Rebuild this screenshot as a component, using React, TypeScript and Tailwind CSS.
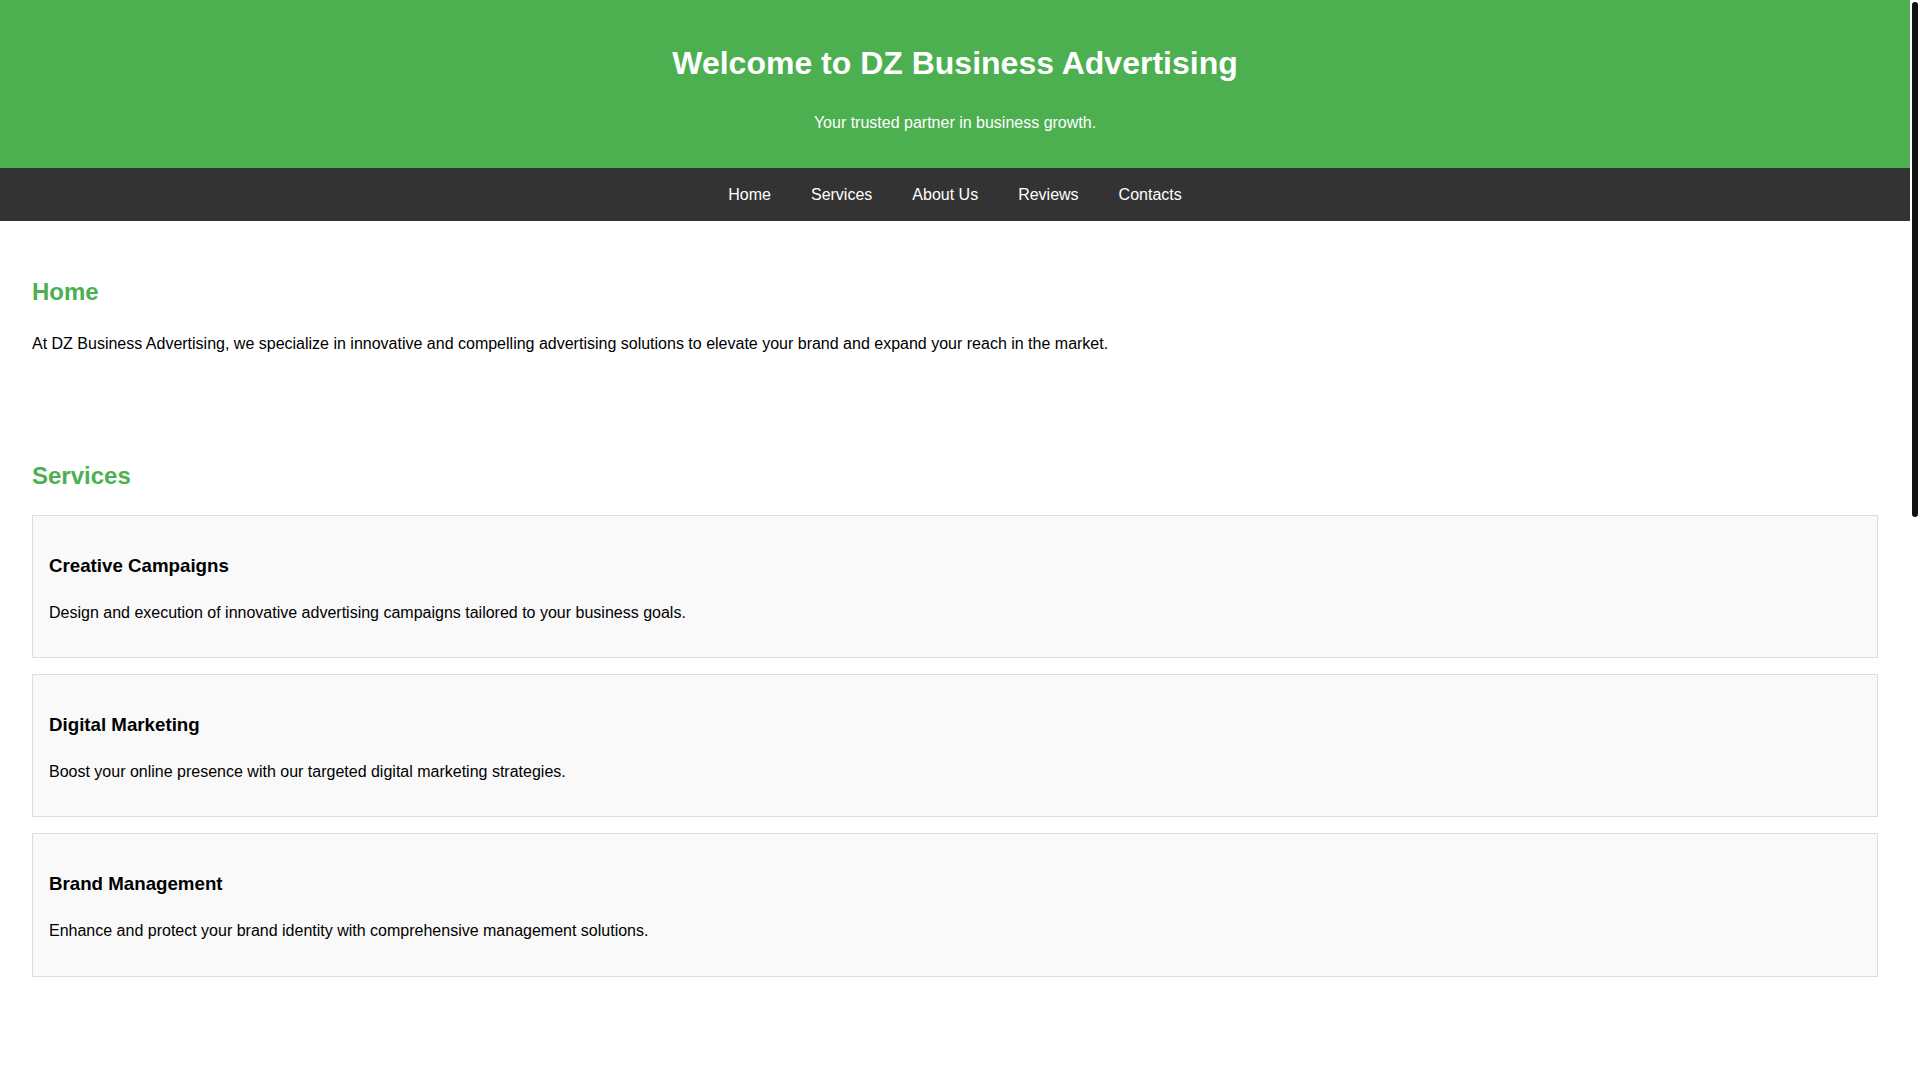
import React from "react"

const links = ["Home", "Services", "About Us", "Reviews", "Contacts"]

const services = [
  {
    title: "Creative Campaigns",
    text: "Design and execution of innovative advertising campaigns tailored to your business goals.",
  },
  {
    title: "Digital Marketing",
    text: "Boost your online presence with our targeted digital marketing strategies.",
  },
  {
    title: "Brand Management",
    text: "Enhance and protect your brand identity with comprehensive management solutions.",
  },
]

const reviews = [
  {
    quote: "DZ Business Advertising transformed our brand. Our sales went up by 40% in just three months!",
    author: "Sarah K., Retail Owner",
  },
  {
    quote: "Professional, creative and always on time. Highly recommended for any growing business.",
    author: "Mohamed B., Startup Founder",
  },
]

const Card = ({ children }: { children: React.ReactNode }) => (
  <div className="flex flex-col border border-[#ddd] bg-[#f9f9f9] p-4 mb-4">{children}</div>
)

const Heading = ({ children }: { children: React.ReactNode }) => (
  <h2 className="text-2xl font-bold text-[#4CAF50] leading-[38.4px] mt-5 mb-5">{children}</h2>
)

export default function App() {
  return (
    <div className="flex min-h-screen bg-white text-black text-base leading-[25.6px] font-['Liberation_Sans',Arial,sans-serif]">
      <div className="flex-1 min-w-0">
        {/* header */}
        <header className="flex flex-col items-center bg-[#4CAF50] text-white text-center pt-[38px] pb-[32px] gap-[21px]">
          <h1 className="text-[32px] font-bold leading-[51px]">Welcome to DZ Business Advertising</h1>
          <p className="leading-[26px]">Your trusted partner in business growth.</p>
        </header>

        {/* nav */}
        <nav className="flex justify-center items-center bg-[#333] h-[53px]">
          {links.map((item) => (
            <a key={item} href="#" className="px-5 text-white">
              {item}
            </a>
          ))}
        </nav>

        <main className="flex flex-col px-8 pt-8 pb-8">
          {/* home */}
          <section className="flex flex-col mb-16">
            <Heading>Home</Heading>
            <p className="mb-4">
              At DZ Business Advertising, we specialize in innovative and compelling advertising solutions to elevate
              your brand and expand your reach in the market.
            </p>
          </section>

          {/* services */}
          <section className="flex flex-col mb-16">
            <Heading>Services</Heading>
            {services.map((s) => (
              <Card key={s.title}>
                <h3 className="text-[18.72px] font-bold leading-[30px] my-[18.72px]">{s.title}</h3>
                <p className="mb-4">{s.text}</p>
              </Card>
            ))}
          </section>

          {/* about */}
          <section className="flex flex-col mb-16">
            <Heading>About Us</Heading>
            <p className="mb-4">
              Founded with a passion for creativity and results, DZ Business Advertising helps companies of every size
              tell their story, connect with customers and grow with confidence.
            </p>
          </section>

          {/* reviews */}
          <section className="flex flex-col mb-16">
            <Heading>Reviews</Heading>
            {reviews.map((r) => (
              <Card key={r.author}>
                <p className="my-4 italic">“{r.quote}”</p>
                <p className="mb-4 font-bold">- {r.author}</p>
              </Card>
            ))}
          </section>

          {/* contacts */}
          <section className="flex flex-col mb-16">
            <Heading>Contacts</Heading>
            <p className="mb-4">Email: contact@dzbusinessadvertising.com | Phone: +213 555 123 456</p>
            <form className="flex flex-col gap-3 max-w-[600px]">
              <input className="border border-[#ddd] p-2" placeholder="Your Name" />
              <input className="border border-[#ddd] p-2" placeholder="Your Email" />
              <textarea className="border border-[#ddd] p-2 h-[140px]" placeholder="Your Message" />
              <button type="button" className="self-start bg-[#4CAF50] text-white px-5 py-2">
                Send Message
              </button>
            </form>
          </section>
        </main>

        {/* footer */}
        <footer className="bg-[#333] text-white text-center py-5">
          <p>&copy; 2024 DZ Business Advertising. All rights reserved.</p>
        </footer>
      </div>

      {/* page scrollbar */}
      <div className="w-[10px] shrink-0 bg-white">
        <div className="mx-[2px] mt-[2px] h-[515px] rounded-[3px] bg-[#111]" />
      </div>
    </div>
  )
}
